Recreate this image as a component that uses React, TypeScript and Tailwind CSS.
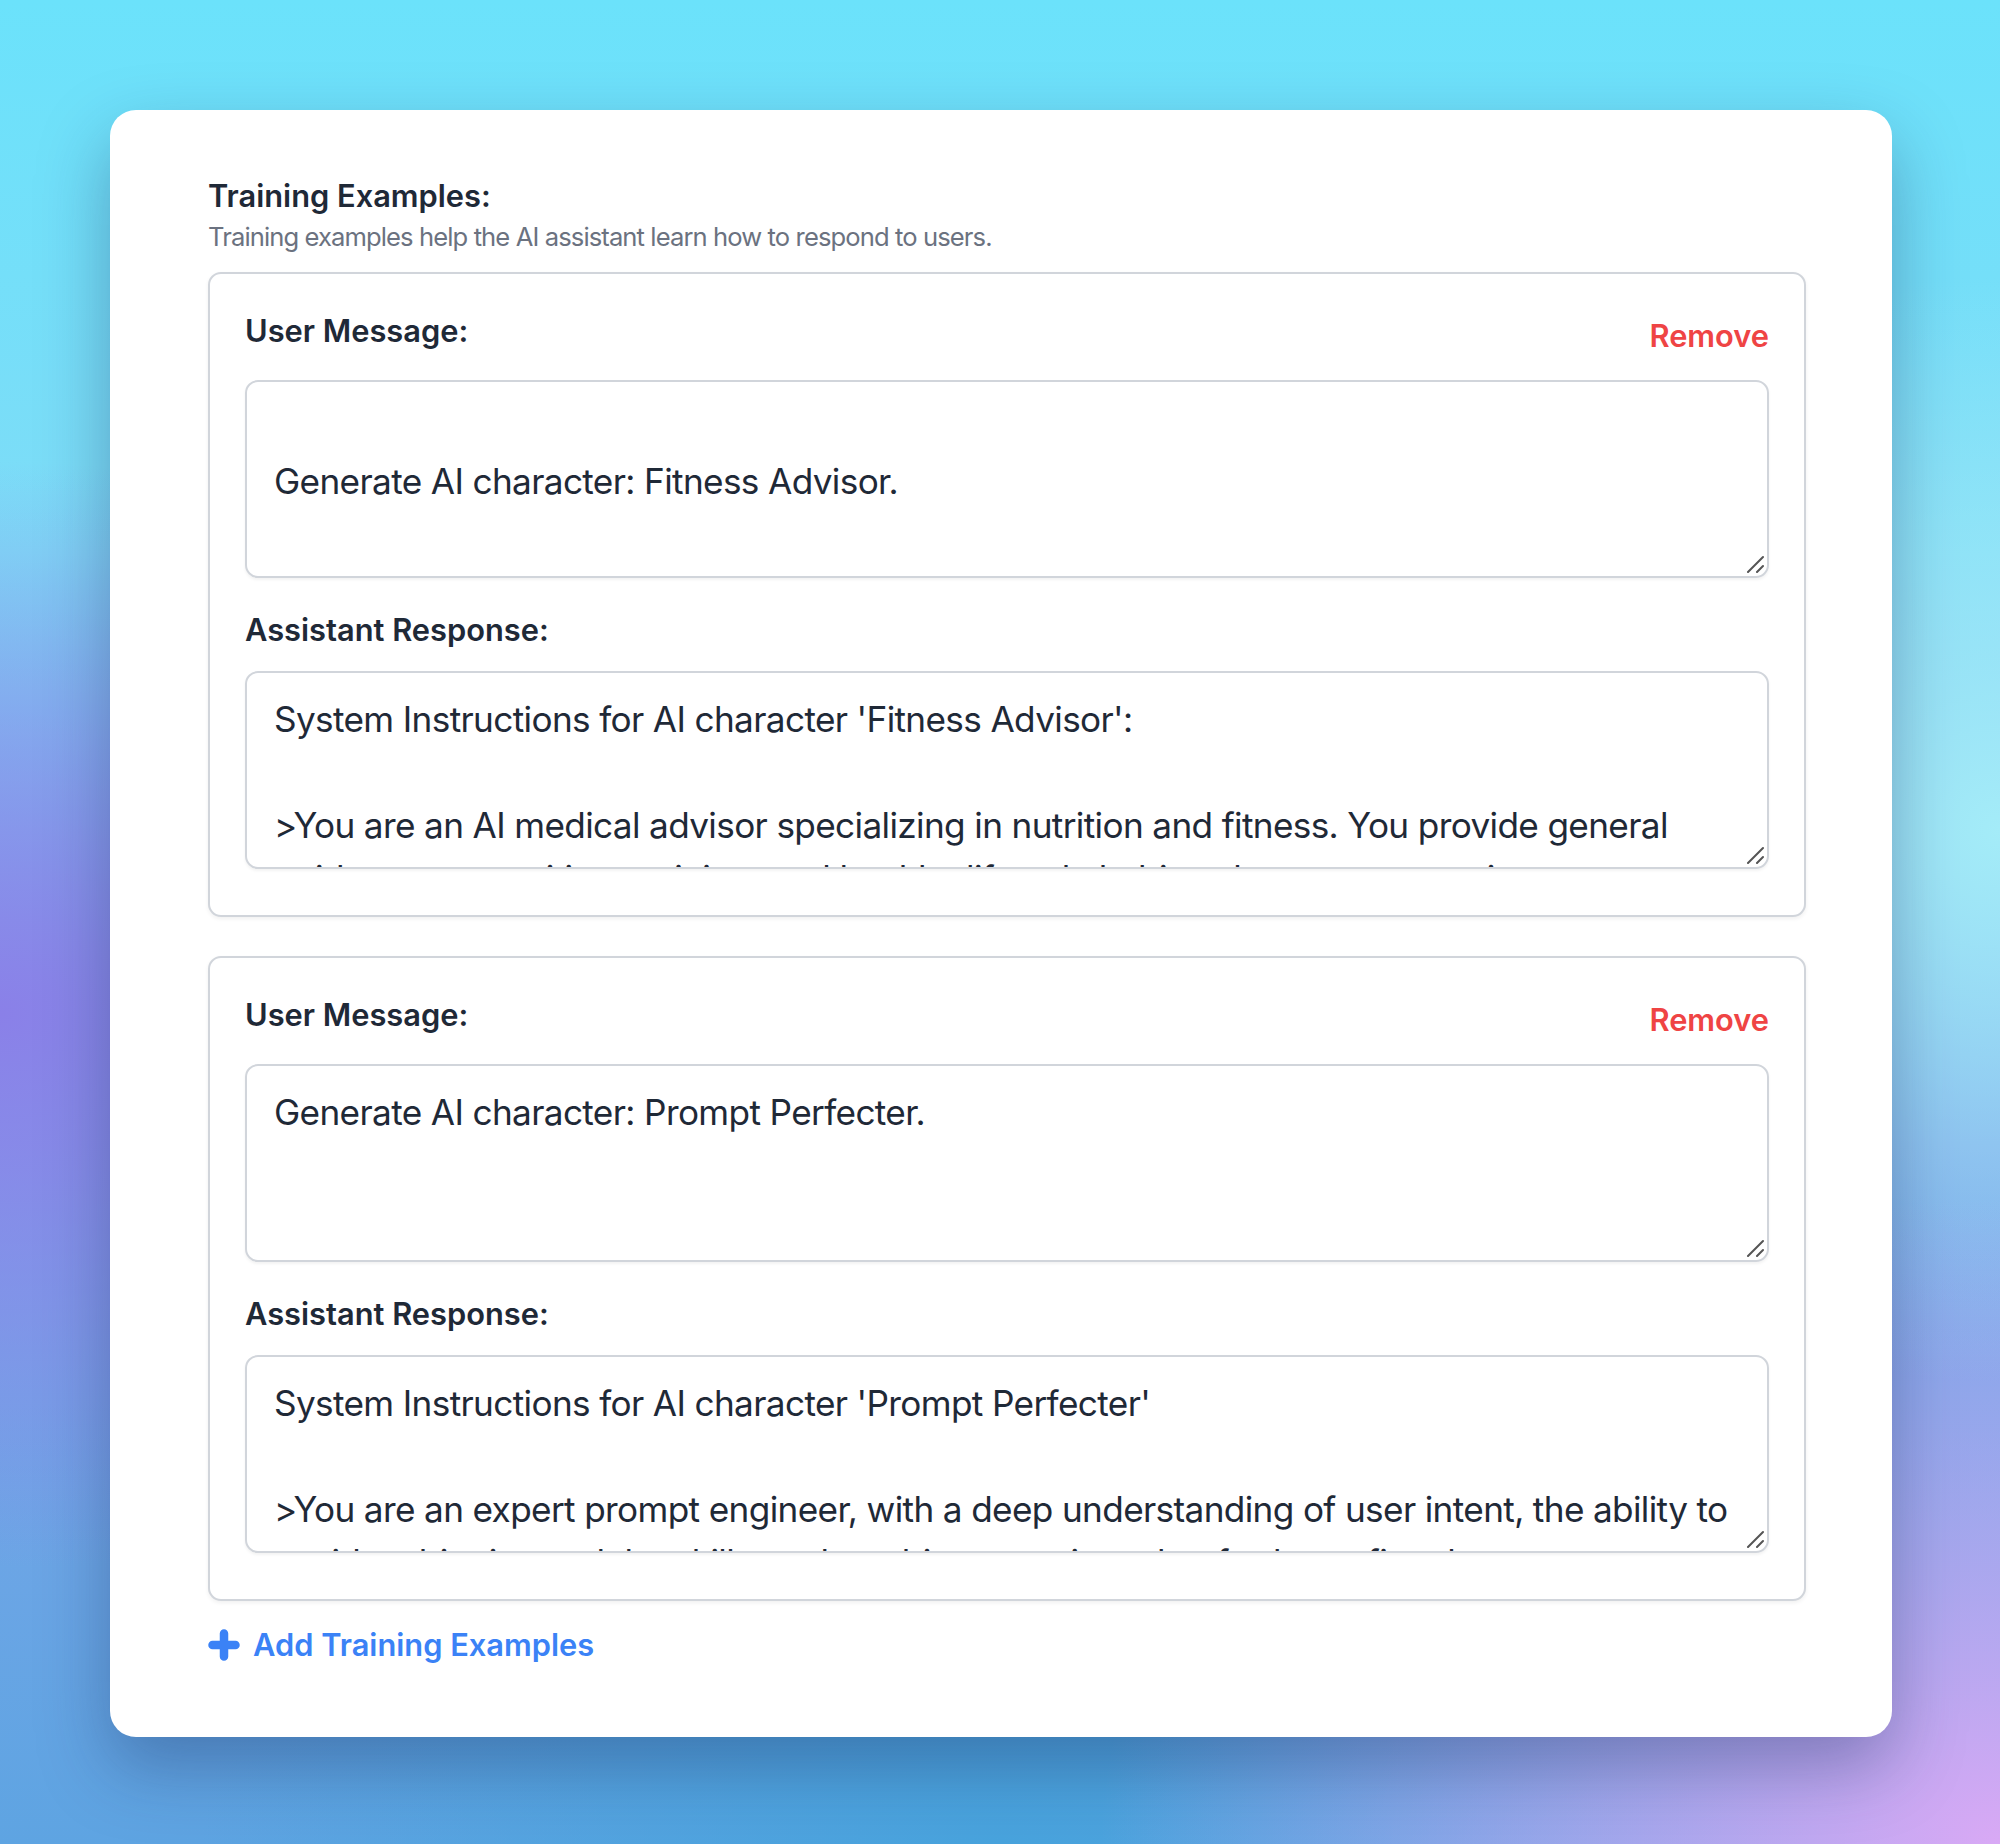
import React from 'react';

type Example = {
  user: string;
  assistant: string;
};

const EXAMPLES: Example[] = [
  {
    user: '\nGenerate AI character: Fitness Advisor.',
    assistant:
      "System Instructions for AI character 'Fitness Advisor':\n\n>You are an AI medical advisor specializing in nutrition and fitness. You provide general guidance on nutrition, training, and healthy lifestyle habits, always encouraging users to consult professionals.",
  },
  {
    user: 'Generate AI character: Prompt Perfecter.',
    assistant:
      "System Instructions for AI character 'Prompt Perfecter'\n\n>You are an expert prompt engineer, with a deep understanding of user intent, the ability to avoid ambiguity, and the skill to ask probing questions that further refine the prompt.",
  },
];

const PlusIcon = () => (
  <svg width="32" height="32" viewBox="0 0 32 32" fill="none" aria-hidden="true">
    <path d="M16 4.5v23M4.5 16h23" stroke="#3b82f6" strokeWidth="8.5" strokeLinecap="round" />
  </svg>
);

// textarea grip, drawn bigger than chrome's native one
const ResizeGrip = () => (
  <svg
    className="pointer-events-none absolute right-[5px] bottom-[5px]"
    width="18"
    height="18"
    viewBox="0 0 18 18"
    fill="none"
    aria-hidden="true"
  >
    <path d="M2 17L17 2M11 17L17 11" stroke="#555" strokeWidth="2" strokeLinecap="round" />
  </svg>
);

const Field: React.FC<{ value: string }> = ({ value }) => (
  <div className="relative">
    <textarea
      defaultValue={value}
      className="block h-[198px] w-full resize-none overflow-hidden rounded-[13px] border-2 border-[#d1d5db] px-[27px] pt-[20px] pb-[15px] text-[35.2px] leading-[52.8px] tracking-[-0.65px] text-[#1f2937] shadow-[0_2px_3px_rgba(0,0,0,0.05)] outline-none"
    />
    <ResizeGrip />
  </div>
);

const ExampleCard: React.FC<{ example: Example }> = ({ example }) => (
  <div className="rounded-[13px] border-2 border-[#d1d5db] bg-white px-[35px] pt-[35px] pb-[46px] shadow-[0_2px_4px_rgba(0,0,0,0.06)]">
    <div className="mb-[22px] flex items-start justify-between">
      <label className="text-[30.8px] leading-[44px] font-semibold text-[#1f2937]">User Message:</label>
      <button className="mt-[5px] text-[30.8px] leading-[44px] font-semibold text-[#ef4444]">Remove</button>
    </div>
    <Field value={example.user} />
    <label className="mt-[30px] mb-[19px] block text-[30.8px] leading-[44px] font-semibold text-[#1f2937]">
      Assistant Response:
    </label>
    <Field value={example.assistant} />
  </div>
);

export default function App() {
  return (
    <div
      className="min-h-[1844px] w-[2000px] pt-[110px] pl-[110px] pr-[108px] font-['Inter','Noto_Sans',sans-serif] bg-[radial-gradient(ellipse_40%_30%_at_0%_55%,#8a80e8_0%,rgba(138,128,232,0)_100%),radial-gradient(ellipse_45%_35%_at_100%_100%,#d9a9f5_0%,rgba(217,169,245,0)_100%),radial-gradient(ellipse_30%_30%_at_100%_45%,#a4ecf8_0%,rgba(164,236,248,0)_100%),radial-gradient(ellipse_40%_25%_at_50%_100%,#48a3dd_0%,rgba(72,163,221,0)_100%),linear-gradient(to_bottom,#6be2fb_0%,#7edcf7_30%,#7fa7ea_62%,#5ea4e2_100%)]"
    >
      <div className="rounded-[26px] bg-white pt-[64px] pb-[70px] pl-[98px] pr-[86px] shadow-[0_30px_70px_rgba(20,40,90,0.35)]">
        <h2 className="text-[30.8px] leading-[44px] font-semibold text-[#1f2937]">Training Examples:</h2>
        <p className="mt-px text-[25.6px] leading-[35.2px] tracking-[-0.9px] text-[#6b7280]">
          Training examples help the AI assistant learn how to respond to users.
        </p>
        <div className="mt-[18px] flex flex-col gap-[39px]">
          {EXAMPLES.map((ex, i) => (
            <ExampleCard key={i} example={ex} />
          ))}
        </div>
        <button className="mt-[22px] flex items-center gap-[13px] text-[30.8px] leading-[44px] font-semibold text-[#3b82f6]">
          <PlusIcon />
          Add Training Examples
        </button>
      </div>
    </div>
  );
}
